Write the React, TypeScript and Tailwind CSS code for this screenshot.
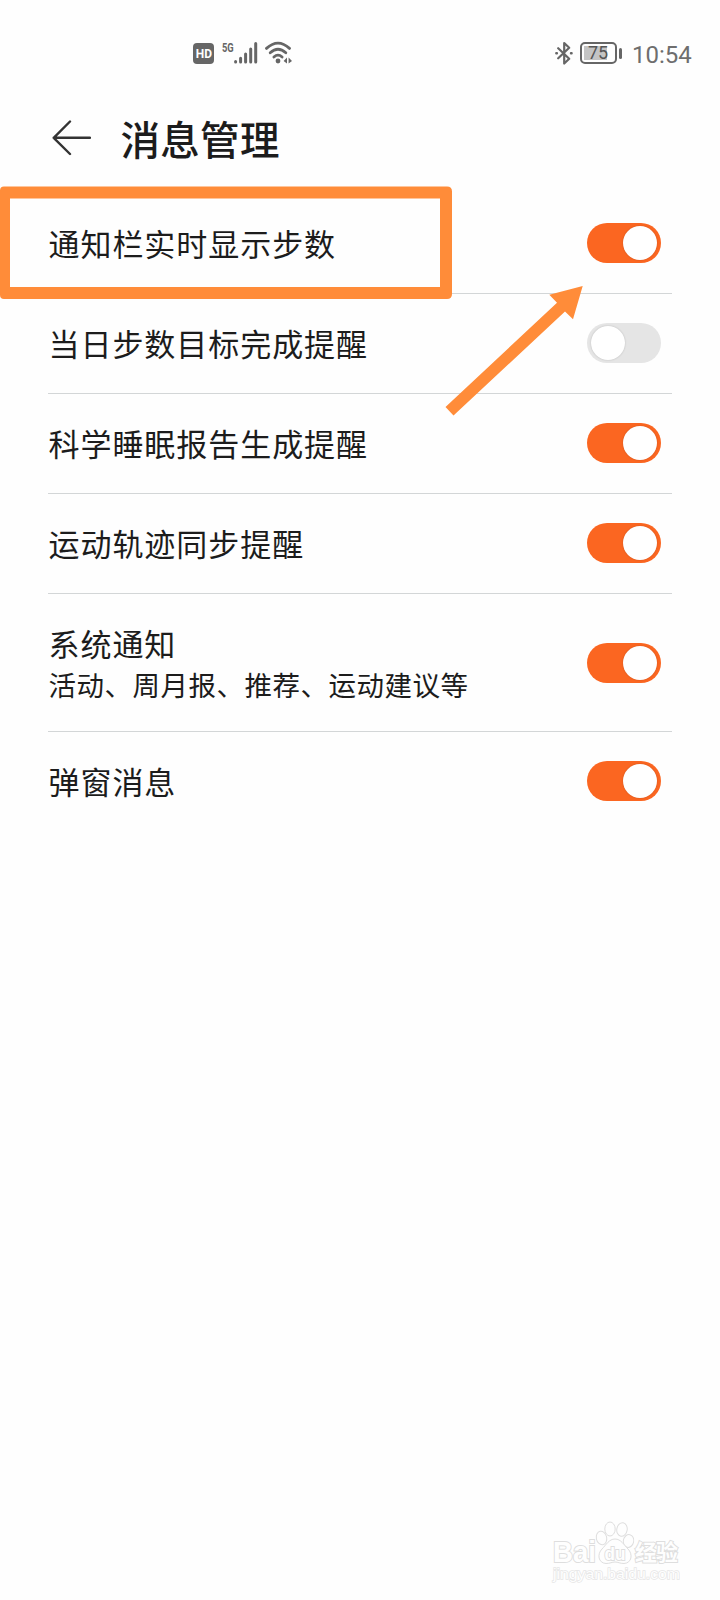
import React, { useState } from 'react';
import clsx from 'clsx';

interface SettingItem {
  id: string;
  title: string;
  desc?: string;
  enabled: boolean;
}

const ITEMS: SettingItem[] = [{
  id: 'steps_bar',
  title: '通知栏实时显示步数',
  enabled: true
}, {
  id: 'step_goal',
  title: '当日步数目标完成提醒',
  enabled: false
}, {
  id: 'sleep_report',
  title: '科学睡眠报告生成提醒',
  enabled: true
}, {
  id: 'track_sync',
  title: '运动轨迹同步提醒',
  enabled: true
}, {
  id: 'system',
  title: '系统通知',
  desc: '活动、周月报、推荐、运动建议等',
  enabled: true
}, {
  id: 'popup',
  title: '弹窗消息',
  enabled: true
}];

function SignalIcon() {
  return <svg className="h-6 w-6" viewBox="0 0 24 24" stroke="#666" strokeWidth="3" strokeLinecap="round">
      <path d="M1.6 21.4v.6M6.6 18.3v3.7M11.6 14v8M16.7 9v13M21.7 3.5v18.5" />
    </svg>;
}

function WifiIcon() {
  return <svg className="h-6 w-7" viewBox="0 0 28 24" fill="none" stroke="#666" strokeWidth="2.8" strokeLinecap="round">
      <path d="M1.5 7.4Q13 -3.2 24.5 7.4" />
      <path d="M5.2 11.8Q13 4.6 20.8 11.8" />
      <path d="M8.9 16Q13 12.2 17.1 16" />
      <circle cx="13" cy="20" r="2.4" fill="#666" stroke="none" />
      <path d="M22 16.5v6l-3.4-2.5zM23.6 16.5v6l3.4-2.5z" fill="#666" stroke="none" />
    </svg>;
}

function BluetoothIcon() {
  return <svg className="h-6 w-[18px]" viewBox="0 0 18 24" fill="none" stroke="#666" strokeWidth="2.2" strokeLinejoin="round" strokeLinecap="round">
      <path d="M3.2 7.2L14.2 17.7L9.2 22.5V2L14.2 6.8L3.2 17.3" />
      <path d="M1.3 12.2h.6M16 12.2h.6" strokeWidth="2.4" />
    </svg>;
}

function StatusBar() {
  return <div className="flex h-[108px] items-start justify-between pt-10 pr-[27px] pl-[193px] font-[Roboto,sans-serif] text-[#666]">
      <div className="flex items-start">
        <span className="mt-[3px] flex h-[21px] w-[21px] items-center justify-center rounded bg-[#666] text-[13px] font-bold text-white"><span className="scale-x-[0.92]">HD</span></span>
        <span className="mt-0.5 ml-2 w-[12px] text-[13px] leading-[11px] font-bold"><span className="inline-block origin-left scale-x-[0.72]">5G</span></span>
        <div className="flex">
          <SignalIcon />
          <div className="ml-[7px] pt-px">
            <WifiIcon />
          </div>
        </div>
      </div>
      <div className="flex items-start">
        <div className="pt-px">
          <BluetoothIcon />
        </div>
        <div className="mt-0.5 ml-[7px] flex h-[22px] w-[37px] rounded-[5px] border-2 border-[#666] p-[2px]">
          <span className="flex h-full w-[23px] items-center justify-center bg-[#c4c4c4] pl-[5px] text-[18px] leading-none text-[#555]">75</span>
        </div>
        <span className="mt-2 ml-0.5 h-[11px] w-[3px] rounded-sm bg-[#666]" />
        <span className="mt-px ml-[10px] h-7 w-[61px] text-[24px] leading-7 text-[#6e6e6e]">10:54</span>
      </div>
    </div>;
}

function Toggle({ checked, onChange }: { checked: boolean; onChange: () => void }) {
  return <button type="button" role="switch" aria-checked={checked} onClick={onChange} className={clsx('flex h-10 w-[74px] rounded-full p-[3px]', checked ? 'justify-end bg-[#fb6621] pr-1' : 'justify-start bg-[#e5e5e5] pl-1')}>
      <span className="h-[34px] w-[34px] rounded-full bg-white shadow-[0_0_2px_rgba(0,0,0,0.2)]" />
    </button>;
}

// Frame and arrow that point the reader at the first switch
function Highlight() {
  return <svg className="pointer-events-none absolute top-0 left-0 h-[430px] w-full" viewBox="0 0 720 430">
      <path fillRule="evenodd" fill="#ff8c39" d="M4 186.5H447Q452 186.5 452 191.5V294Q452 299 447 299H4Q0 299 0 295V190.5Q0 186.5 4 186.5ZM10 198.5V287H440V198.5Z" />
      <path fill="#ff8c39" d="M582.7 286L573 319.3L565 311.5L453.5 415.5L445.5 407L557 302.8L549.3 294.8Z" />
    </svg>;
}

function Watermark() {
  return <svg className="absolute right-10 bottom-[12px] h-[70px] w-[140px] [&_text]:[paint-order:stroke]" viewBox="540 1518 140 70" fill="#fefefe" stroke="#dedede" strokeWidth="1">
      <text x="553" y="1562" fontSize="29" fontWeight="700" textLength="43" lengthAdjust="spacingAndGlyphs" strokeWidth="2" fontFamily="Liberation Sans, sans-serif">Bai</text>
      <ellipse cx="601.5" cy="1538" rx="5.2" ry="6.8" transform="rotate(-12 601.5 1538)" />
      <ellipse cx="610" cy="1529" rx="5.2" ry="7" />
      <ellipse cx="622" cy="1529.5" rx="5.2" ry="6.8" transform="rotate(10 622 1529.5)" />
      <ellipse cx="628.5" cy="1541" rx="5.2" ry="6.5" transform="rotate(12 628.5 1541)" />
      <path d="M615 1539C609 1539 606 1545 602 1549C597 1554 598 1563 606 1563.5C610 1563.5 612 1562 615 1562S620 1563.5 624 1563.5C632 1563 633 1554 628 1549C624 1545 621 1539 615 1539Z" />
      <text x="604.5" y="1560" fontSize="18" fontWeight="700" textLength="21" lengthAdjust="spacingAndGlyphs" strokeWidth="1.8" fontFamily="Liberation Sans, sans-serif">du</text>
      <text x="635" y="1560" fontSize="22" fontWeight="700" textLength="43" strokeWidth="2" fontFamily="Noto Sans CJK SC, sans-serif">经验</text>
      <text x="553" y="1579" fontSize="15" textLength="127" stroke="#e6e6e6" strokeWidth="1.4" lengthAdjust="spacingAndGlyphs" fontFamily="Liberation Sans, sans-serif">jingyan.baidu.com</text>
    </svg>;
}

export default function App() {
  const [items, setItems] = useState<SettingItem[]>(ITEMS);

  const handleToggle = (id: string) => {
    setItems(prev => prev.map(item => item.id === id ? { ...item, enabled: !item.enabled } : item));
  };

  return <div className="relative h-[1600px] w-[720px] overflow-hidden bg-[#fefefe] font-['Noto_Sans_CJK_SC',sans-serif] text-[#1c1c1c]">
      <StatusBar />
      <header className="flex h-[86px] items-start pl-[51px]">
        <button type="button" aria-label="Back" className="mt-2.5">
          <svg className="h-10 w-10" viewBox="0 0 40 40" fill="none" stroke="#333" strokeWidth="2.4" strokeLinecap="round" strokeLinejoin="round">
            <path d="M19 3.5L2.7 19.8L19 36M2.7 19.8H39" />
          </svg>
        </button>
        <h1 className="ml-[29.5px] text-[39.5px] leading-[60px] font-medium tracking-[0.3px]">消息管理</h1>
      </header>

      <main className="px-12">
        {items.map((item, index) => <div key={item.id} className={clsx('flex items-center justify-between pr-[11px]', item.desc ? 'h-[138px]' : 'h-[100px]', index < items.length - 1 ? 'border-b border-[#d3d6d7]' : 'pb-px')}>
            <div className="pb-px pl-[0.5px]">
              <p className="text-[31px] leading-[44px] tracking-[0.95px]">{item.title}</p>
              {item.desc && <p className="text-[27.5px] leading-[38px] tracking-[0.5px]">{item.desc}</p>}
            </div>
            <div className={clsx('shrink-0', !item.desc && 'pb-px')}>
              <Toggle checked={item.enabled} onChange={() => handleToggle(item.id)} />
            </div>
          </div>)}
      </main>

      <Highlight />
      <Watermark />
    </div>;
}
